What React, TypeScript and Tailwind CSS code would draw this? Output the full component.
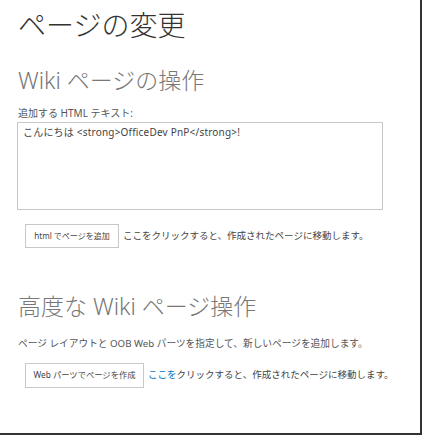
import React from "react";

const jp = { fontFamily: '"Noto Sans", "Noto Sans CJK JP", sans-serif' };

export default function App() {
  return (
    <div
      className="w-[422px] h-[435px] bg-white border-r-2 border-b-2 border-[#333] box-border overflow-hidden"
      style={jp}
    >
      <div className="pl-[18px] flex flex-col">
        <h1 className="mt-[7px] text-[28px] leading-[36px] font-light text-[#333]">ページの変更</h1>
        <h2 className="mt-[22px] text-[23px] leading-[30px] font-light text-[#777]">Wiki ページの操作</h2>
        <div className="mt-[11px] text-[10px] leading-[14px] text-[#555]">追加する HTML テキスト:</div>
        <textarea
          readOnly
          defaultValue="こんにちは <strong>OfficeDev PnP</strong>!"
          className="ml-[-1px] mt-[2px] w-[366px] h-[88px] border border-[#c8c8c8] px-[5px] py-[2px] text-[10px] leading-[14px] tracking-[0.2px] text-[#444] resize-none outline-none"
          style={jp}
        />
        <div className="mt-[14px] ml-[7px] flex items-center">
          <button className="h-[24px] w-[94px] border border-[#c8c8c8] bg-white text-[8px] text-[#444] flex items-center justify-center whitespace-nowrap" style={jp}>
            html でページを追加
          </button>
          <span className="ml-[4px] text-[9.5px] text-[#444] whitespace-nowrap">ここをクリックすると、作成されたページに移動します。</span>
        </div>
        <h2 className="mt-[43px] text-[23px] leading-[30px] font-light text-[#777]">高度な Wiki ページ操作</h2>
        <div className="mt-[16px] text-[9.7px] leading-[14px] text-[#555] whitespace-nowrap">ページ レイアウトと OOB Web パーツを指定して、新しいページを追加します。</div>
        <div className="mt-[12px] ml-[7px] flex items-center">
          <button className="h-[25px] w-[119px] border border-[#c8c8c8] bg-white text-[8.3px] text-[#444] flex items-center justify-center whitespace-nowrap" style={jp}>
            Web パーツでページを作成
          </button>
          <span className="ml-[4px] text-[9.5px] text-[#444] whitespace-nowrap">
            <span className="text-[#0072c6]">ここを</span>クリックすると、作成されたページに移動します。
          </span>
        </div>
      </div>
    </div>
  );
}
